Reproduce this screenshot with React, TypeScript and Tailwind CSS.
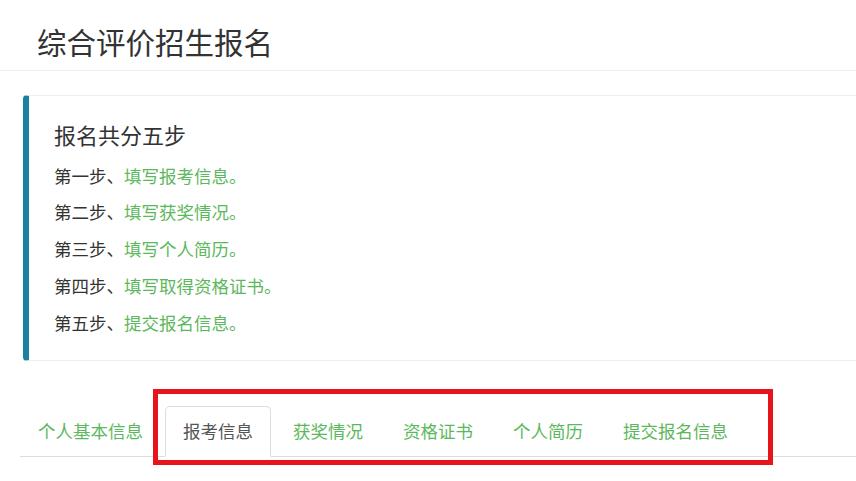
import React from "react";

const steps: [string, string][] = [
  ["第一步、", "填写报考信息。"],
  ["第二步、", "填写获奖情况。"],
  ["第三步、", "填写个人简历。"],
  ["第四步、", "填写取得资格证书。"],
  ["第五步、", "提交报名信息。"],
];

const tabs = ["个人基本信息", "报考信息", "获奖情况", "资格证书", "个人简历", "提交报名信息"];

export default function App() {
  return (
    <div className="relative w-[856px] h-[481px] overflow-hidden bg-white font-['Noto_Sans_CJK_SC','Noto_Sans',sans-serif]">
      <header className="h-[71px] border-b border-[#eeeeee] pl-[37px] pt-[25px]">
        <h1 className="text-[29.5px] leading-[33px] text-[#333333] font-normal">综合评价招生报名</h1>
      </header>

      <section className="mt-[24px] ml-[23px] mr-[-20px] border border-[#eeeeee] border-l-[6px] border-l-[#1b809e] rounded-[4px] pt-[25px] pl-[25px] pb-[25px]">
        <h4 className="text-[22px] leading-[26px] text-[#333333] mb-[15.5px]">报名共分五步</h4>
        {steps.map(([a, b], i) => (
          <p
            key={i}
            className={"text-[17.5px] leading-[25px] text-[#333333] " + (i < steps.length - 1 ? "mb-[11.75px]" : "")}
          >
            {a}
            <span className="text-[#5cb85c]">{b}</span>
          </p>
        ))}
      </section>

      <div className="relative mt-[45px] ml-[20px]">
        <ul className="flex border-b border-[#dddddd]">
          {tabs.map((t, i) => (
            <li
              key={t}
              className={
                "mr-[4px] -mb-px px-[17px] pt-[11px] pb-[13px] text-[17.5px] leading-[25px] border rounded-t-[5px] " +
                (i === 1
                  ? "border-[#dddddd] border-b-white bg-white text-[#555555]"
                  : "border-transparent text-[#5cb85c]")
              }
            >
              {t}
            </li>
          ))}
        </ul>
        <div className="absolute left-[133px] top-[-17px] w-[620px] h-[76px] border-[5px] border-[#e8141b] pointer-events-none" />
      </div>
    </div>
  );
}
